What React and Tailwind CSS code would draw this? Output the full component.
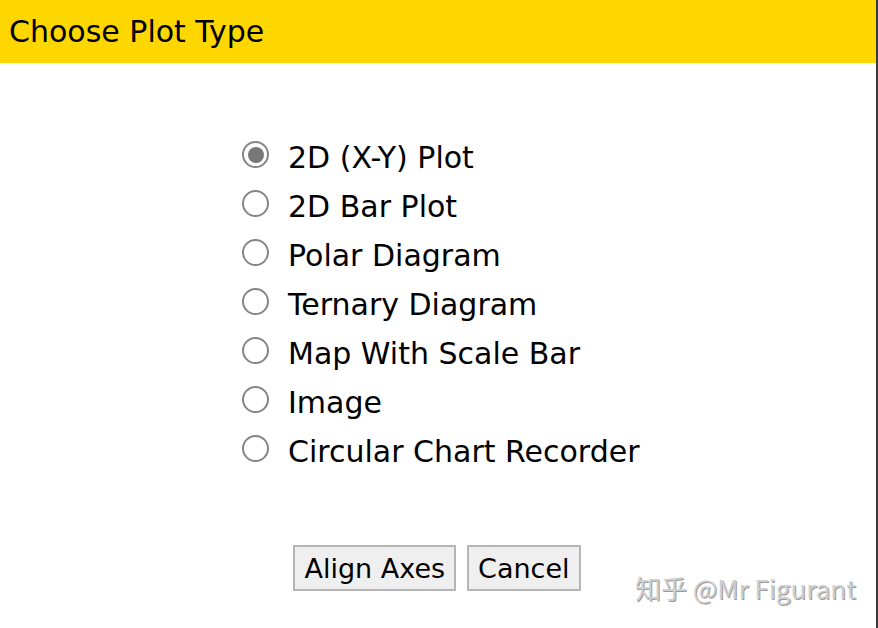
import React, { useState } from 'react';

const options = [
  '2D (X-Y) Plot',
  '2D Bar Plot',
  'Polar Diagram',
  'Ternary Diagram',
  'Map With Scale Bar',
  'Image',
  'Circular Chart Recorder'
];

const Radio = ({ checked }) => (
  <span className="flex items-center justify-center w-[27px] h-[27px] rounded-full border-2 border-[#858585] bg-white shrink-0">
    {checked && <span className="w-[16px] h-[16px] rounded-full bg-[#777777]"></span>}
  </span>
);

const App = () => {
  const [selected, setSelected] = useState(0);

  return (
    <div className="w-[878px] h-[628px] bg-white flex flex-col relative border-r-2 border-[#3a3a3a] overflow-hidden font-['DejaVu_Sans',sans-serif] text-black">
      {/* Header */}
      <div className="h-[63px] bg-[#ffd700] flex items-center pl-[9px]">
        <h1 className="text-[30px] leading-none">Choose Plot Type</h1>
      </div>

      {/* Options */}
      <div className="flex flex-col pl-[242px] pt-[75px] gap-[16px]">
        {options.map((opt, i) => (
          <label
            key={opt}
            className="flex items-center gap-[19px] h-[33px] cursor-pointer"
            onClick={() => setSelected(i)}
          >
            <Radio checked={selected === i} />
            <span className="text-[30px] leading-none relative top-[3px]">{opt}</span>
          </label>
        ))}
      </div>

      {/* Buttons */}
      <div className="flex justify-center gap-[11px] mt-[80px]">
        <button className="h-[46px] px-[9px] bg-[#efefef] border-2 border-[#b5b5b5] text-[27px] leading-none ml-[-2px]">
          Align Axes
        </button>
        <button className="h-[46px] px-[9px] bg-[#efefef] border-2 border-[#b5b5b5] text-[27px] leading-none">
          Cancel
        </button>
      </div>

      {/* Watermark */}
      <div className="absolute right-[20px] bottom-[27px] text-[26px] leading-none text-[#cfcfcf] font-['Noto_Sans_CJK_SC',sans-serif] [text-shadow:1px_1px_0_#9a9a9a]">
        知乎 @Mr Figurant
      </div>
    </div>
  );
};

export default App;
